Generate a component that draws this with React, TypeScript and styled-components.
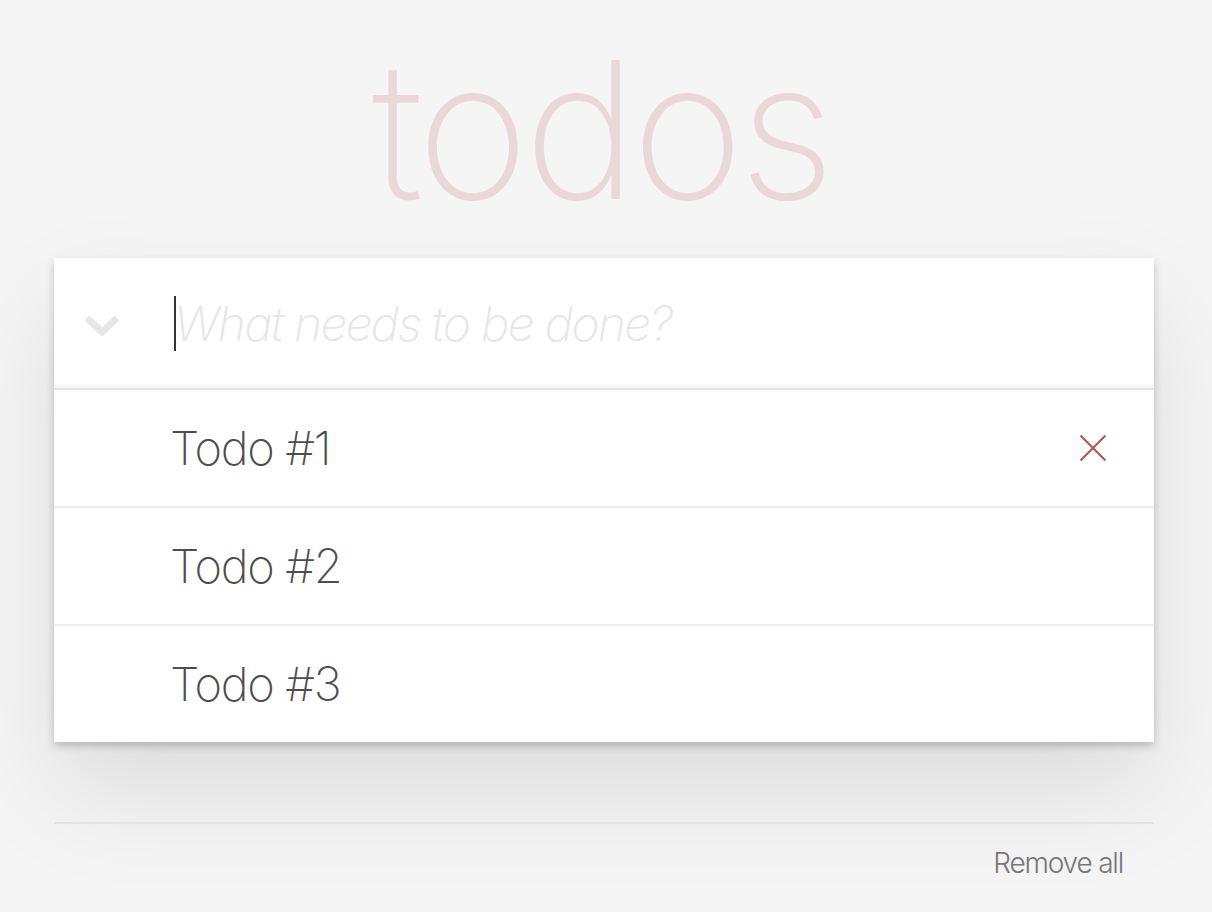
import React, { ReactElement, useState } from 'react';
import styled, { createGlobalStyle } from 'styled-components';

const GlobalStyle = createGlobalStyle`
  html, body {
    margin: 0;
    padding: 0;
    background: #f5f5f5;
  }
  body {
    font-family: 'Helvetica Neue', Inter, 'Noto Sans', sans-serif;
    -webkit-font-smoothing: antialiased;
  }
  * {
    box-sizing: border-box;
  }
`;

const todos: string[] = ['Todo #1', 'Todo #2', 'Todo #3'];

const App = (): ReactElement => {
  const [hovered, setHovered] = useState<number>(0);

  return (
    <Page>
      <GlobalStyle />
      <Title>todos</Title>
      <Card>
        <Header>
          <ToggleAll aria-label="Toggle all">
            <svg width="34" height="22" viewBox="0 0 34 22">
              <path d="M2 3 L17 17 L32 3" fill="none" stroke="#e6e6e6" strokeWidth="7" />
            </svg>
          </ToggleAll>
          <InputWrap>
            <Caret />
            <NewTodo placeholder="What needs to be done?" />
          </InputWrap>
        </Header>
        <List>
          {todos.map((todo, index) => (
            <Item key={todo} onMouseEnter={() => setHovered(index)}>
              <Label>{todo}</Label>
              {hovered === index && (
                <Destroy aria-label="Delete">
                  <svg width="28" height="28" viewBox="0 0 28 28">
                    <path d="M1.5 1.5 L26.5 26.5 M26.5 1.5 L1.5 26.5" stroke="#af5b5e" strokeWidth="2.2" />
                  </svg>
                </Destroy>
              )}
            </Item>
          ))}
        </List>
      </Card>
      <Footer>
        <RemoveAll>Remove all</RemoveAll>
      </Footer>
    </Page>
  );
};

const Page = styled.div`
  min-height: 912px;
  padding: 0 58px 0 54px;
`;

const Title = styled.h1`
  margin: 0;
  height: 258px;
  padding: 25px 6px 0 0;
  text-align: center;
  font-size: 191px;
  font-weight: 160;
  line-height: 210px;
  letter-spacing: -5px;
  color: rgba(175, 47, 47, 0.15);
`;

const Card = styled.section`
  background: #fff;
  box-shadow: 0 4px 8px rgba(0, 0, 0, 0.2), 0 50px 100px rgba(0, 0, 0, 0.1);
`;

const Header = styled.header`
  display: flex;
  align-items: center;
  height: 132px;
  border-bottom: 2px solid #e6e6e6;
  box-shadow: inset 0 -4px 2px rgba(0, 0, 0, 0.03);
`;

const ToggleAll = styled.div`
  width: 120px;
  display: flex;
  justify-content: center;
  padding: 0 24px 0 0;
  margin-top: 6px;
`;

const InputWrap = styled.div`
  position: relative;
  flex: 1;
  height: 100%;
`;

const Caret = styled.span`
  position: absolute;
  left: 0;
  top: 38px;
  width: 2px;
  height: 55px;
  background: #333;
`;

const NewTodo = styled.input`
  width: 100%;
  height: 100%;
  border: none;
  outline: none;
  background: transparent;
  padding: 0 32px 0 0;
  font-family: inherit;
  font-size: 48px;
  font-weight: 300;
  letter-spacing: -1.7px;
  color: #4d4d4d;
  caret-color: transparent;
  &::placeholder {
    font-style: italic;
    font-weight: 200;
    color: #e6e6e6;
  }
`;

const List = styled.ul`
  list-style: none;
  margin: 0;
  padding: 0;
`;

const Item = styled.li`
  display: flex;
  align-items: center;
  height: 118px;
  border-bottom: 2px solid #ededed;
  &:last-child {
    height: 116px;
    border-bottom: none;
  }
`;

const Label = styled.label`
  flex: 1;
  padding-left: 116px;
  font-size: 47px;
  font-weight: 250;
  line-height: 1.2;
  letter-spacing: -1.3px;
  color: #4d4d4d;
`;

const Destroy = styled.button`
  display: flex;
  align-items: center;
  justify-content: center;
  width: 40px;
  height: 40px;
  margin-right: 41px;
  padding: 0;
  border: none;
  background: none;
  cursor: pointer;
`;

const Footer = styled.footer`
  display: flex;
  justify-content: flex-end;
  margin-top: 80px;
  border-top: 2px solid #e3e3e3;
  padding: 22px 31px 0 0;
`;

const RemoveAll = styled.button`
  border: none;
  background: none;
  padding: 0;
  font-family: inherit;
  font-size: 28px;
  font-weight: 300;
  letter-spacing: -1.2px;
  color: #777;
  cursor: pointer;
`;

export default App;
